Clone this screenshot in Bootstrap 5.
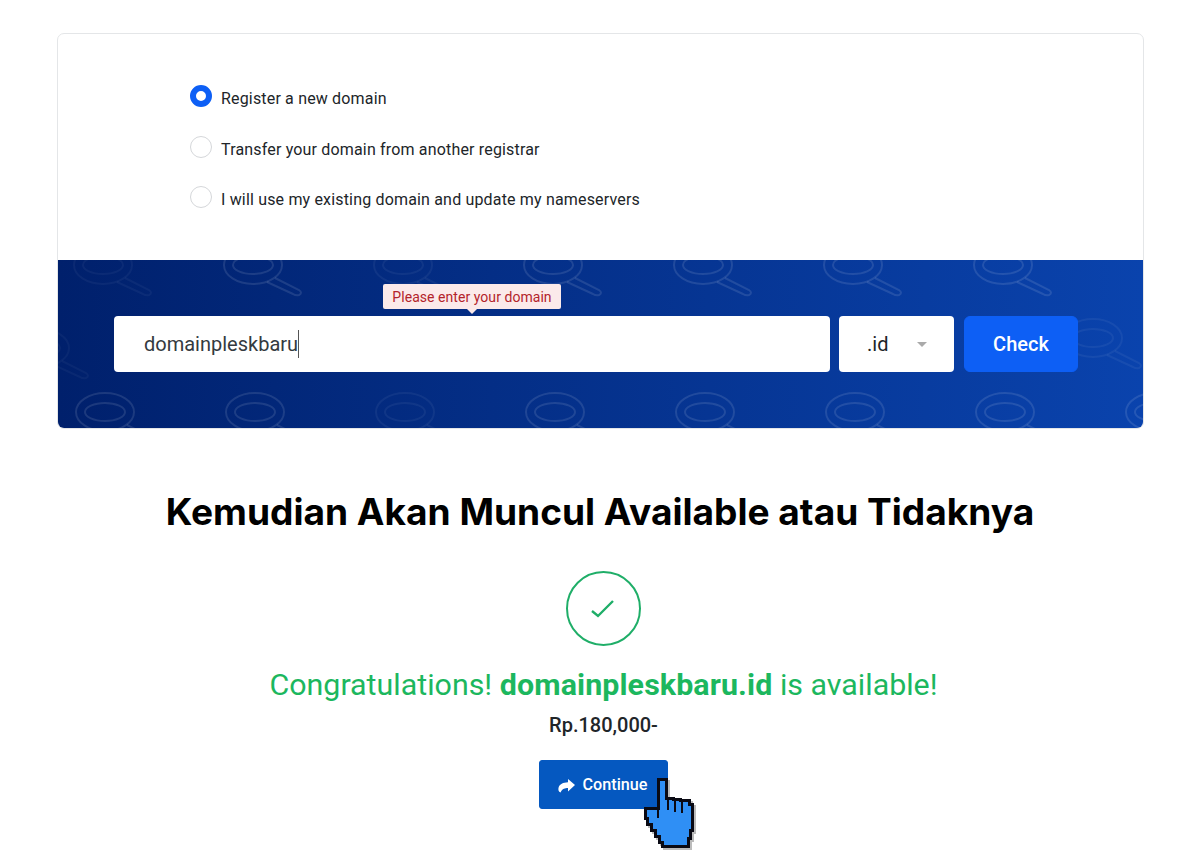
<!DOCTYPE html>
<html lang="en">
<head>
    <meta charset="UTF-8">
    <title>Domain check</title>
    <link href="https://cdn.jsdelivr.net/npm/bootstrap@5.3.0/dist/css/bootstrap.min.css" rel="stylesheet">
    <style>
        body { font-family: Roboto, sans-serif; color: #212529; background: #fff; }
        .order-box { width: 1087px; height: 396px; margin: 33px 0 0 57px; border: 1px solid #e4e6e8; border-radius: 7px; overflow: hidden; }
        .choice-list { height: 226px; padding: 48px 0 0 132px; gap: 22.5px; font-size: 16px; line-height: 22px; letter-spacing: .17px; }
        .choice-label { padding-top: 6px; margin-left: 1px; }
        .radio-dot { width: 22px; height: 22px; border-radius: 50%; border: 1px solid #d5d7da; }
        .radio-dot.is-on { border: 6px solid #0d5ff5; }
        .search-band { height: 168px; padding: 56px 65px 0 56px; gap: 9px; background: linear-gradient(90deg, #00206c 0%, #0a43ad 100%); }
        .band-bg { top: 0; left: 0; }
        .domain-field { width: 716px; height: 56px; border-radius: 4px; padding-left: 30px; font-size: 20px; color: #343a40; }
        .caret-line { width: 1px; height: 28px; background: #555; }
        .tld-box { width: 115px; height: 56px; margin-right: 1px; border-radius: 4px; padding: 0 27px 0 28px; font-size: 20px; }
        .tld-arrow { border: 5px solid transparent; border-top-color: #aaa; border-bottom: 0; }
        .check-btn { width: 114px; height: 56px; background: #0d5ff5; border-color: #0d5ff5; font-size: 20px; font-weight: 500; }
        .tip-box { left: 325px; top: 24px; width: 178px; height: 25px; background: #fbeaea; color: #b3232b; font-size: 14px; line-height: 26px; letter-spacing: .05px; text-align: center; border-radius: 2px; }
        .tip-box::after { content: ""; position: absolute; left: 84px; top: 25px; border: 5px solid transparent; border-top-color: #fbeaea; border-bottom: 0; }
        .result-title { margin: 61px 0 0; font-family: Inter, sans-serif; font-size: 37.1px; font-weight: 700; line-height: 44px; color: #000; }
        .result-body { padding-left: 7px; }
        .check-ring { width: 75px; height: 75px; margin-top: 37px; }
        .avail-text { margin-top: 19px; color: #1cb75e; font-size: 30.4px; line-height: 40px; font-weight: 400; }
        .avail-text strong { font-weight: 700; letter-spacing: .1px; }
        .price-text { margin-top: 8px; font-size: 20px; line-height: 24px; font-weight: 500; }
        .continue-btn { width: 129px; height: 49px; margin-top: 23px; padding-top: 8px; padding-right: 14px; background: #0558c0; border-color: #0558c0; border-radius: 3px; font-size: 16.2px; font-weight: 500; gap: 8px; }
        .hand-cursor { left: 636px; top: 770px; }
    </style>
</head>
<body>

<div class="order-box">
    <div class="choice-list d-flex flex-column">
        <div class="d-flex align-items-center gap-2"><span class="radio-dot is-on"></span><span class="choice-label">Register a new domain</span></div>
        <div class="d-flex align-items-center gap-2"><span class="radio-dot"></span><span class="choice-label">Transfer your domain from another registrar</span></div>
        <div class="d-flex align-items-center gap-2"><span class="radio-dot"></span><span class="choice-label">I will use my existing domain and update my nameservers</span></div>
    </div>
    <div class="search-band position-relative d-flex align-items-start">
        <svg class="band-bg position-absolute" width="1086" height="168" fill="none" stroke="#fff" stroke-opacity=".11" stroke-width="2">
            <defs>
                <g id="lens">
                    <ellipse cx="0" cy="0" rx="29" ry="19"/>
                    <ellipse cx="0" cy="0" rx="20" ry="9"/>
                    <path d="M22 13 L46 25 Q50 28 46 30 Q43 31 40 29 L14 17"/>
                </g>
            </defs>
            <use href="#lens" x="45" y="5" opacity=".4"/><use href="#lens" x="195" y="5"/><use href="#lens" x="345" y="5" opacity=".5"/><use href="#lens" x="495" y="5"/><use href="#lens" x="645" y="5"/><use href="#lens" x="795" y="5"/><use href="#lens" x="945" y="5"/>
            <use href="#lens" x="47" y="152"/><use href="#lens" x="197" y="152"/><use href="#lens" x="347" y="152" opacity=".5"/><use href="#lens" x="497" y="152"/><use href="#lens" x="647" y="152"/><use href="#lens" x="797" y="152"/><use href="#lens" x="947" y="152"/><use href="#lens" x="1097" y="152"/>
            <use href="#lens" x="1035" y="78" opacity=".5"/><use href="#lens" x="-18" y="88" opacity=".35"/>
        </svg>
        <div class="tip-box position-absolute">Please enter your domain</div>
        <div class="domain-field position-relative bg-white d-flex align-items-center"><span>domainpleskbaru</span><span class="caret-line"></span></div>
        <div class="tld-box position-relative bg-white d-flex align-items-center justify-content-between"><span>.id</span><span class="tld-arrow"></span></div>
        <button class="check-btn position-relative btn btn-primary">Check</button>
    </div>
</div>

<div class="d-flex flex-column align-items-center">
    <h2 class="result-title">Kemudian Akan Muncul Available atau Tidaknya</h2>
    <div class="result-body d-flex flex-column align-items-center">
        <svg class="check-ring" viewBox="0 0 75 75" fill="none" stroke="#1fae68" stroke-width="2">
            <circle cx="37.5" cy="37.5" r="36.5"/>
            <path d="M26 40 L32 45 L47 30" stroke-width="2.4"/>
        </svg>
        <div class="avail-text">Congratulations! <strong>domainpleskbaru.id</strong> is available!</div>
        <div class="price-text">Rp.180,000-</div>
        <button class="continue-btn btn btn-primary d-flex align-items-center justify-content-center">
            <svg width="17" height="14" viewBox="0 0 17 14" fill="#fff"><path d="M10 0 L17 6 L10 12.5 V9 C7 9 4.5 9.6 2.6 13.4 C.4 13 0 10.5 .6 8.5 C1.6 5 5 3.4 10 3.2 Z"/></svg>
            <span>Continue</span>
        </button>
    </div>
</div>

<svg class="hand-cursor position-absolute" width="66" height="84" viewBox="0 0 66 84" shape-rendering="crispEdges">
    <path fill="#777" fill-opacity=".5" stroke="#777" stroke-opacity=".5" stroke-width="3" d="M24 11 H32 V30 H39 V31 H46 V32 H55 V36 H58 V62 H56 V70 H54 V78 H28 V74 H25 V68 H21 V62 H17 V56 H13 V50 H11 V40 H23 Z"/>
    <path fill="#2f8ff5" stroke="#0a0a14" stroke-width="3" d="M22 9 H30 V28 H37 V29 H44 V30 H53 V34 H56 V60 H54 V68 H52 V76 H26 V72 H23 V66 H19 V60 H15 V54 H11 V48 H9 V38 H22 Z"/>
    <path fill="none" stroke="#0a0a14" stroke-width="2" d="M22 38 V48 M32 29 V40 M39 30 V42 M46 31 V43"/>
</svg>

</body>
</html>
